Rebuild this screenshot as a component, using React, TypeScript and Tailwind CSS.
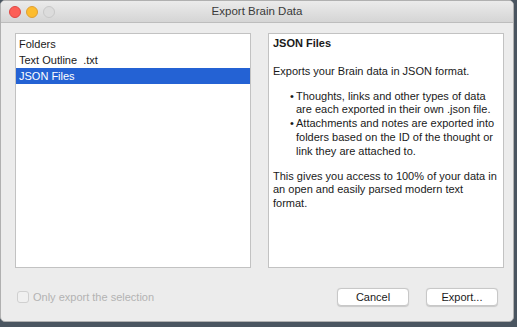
import React from "react";

const font = { fontFamily: '"Liberation Sans", Arial, sans-serif' };

function TrafficLights() {
  return (
    <div className="flex items-center gap-[5px] pl-[8px]">
      <span className="w-[12px] h-[12px] rounded-full bg-[#fc5f57] border border-[#df4744]" />
      <span className="w-[12px] h-[12px] rounded-full bg-[#fdbc2e] border border-[#de9f34]" />
      <span className="w-[12px] h-[12px] rounded-full bg-[#dcdcdc] border border-[#c8c8c8]" />
    </div>
  );
}

export default function App() {
  const items = ["Folders", "Text Outline  .txt", "JSON Files"];
  const selected = 2;

  return (
    <div className="w-[517px] h-[327px] bg-[#4a5560] overflow-hidden" style={font}>
      <div className="flex h-[322px] w-[514px] flex-col rounded-[5px] bg-[#ececec] border border-[#b0b0b0] overflow-hidden">
        {/* title bar */}
        <div className="relative flex h-[22px] shrink-0 items-center bg-gradient-to-b from-[#ebebeb] to-[#d5d5d5] border-b border-[#bdbdbd]">
          <TrafficLights />
          <div className="absolute inset-0 flex items-center justify-center text-[11.5px] text-[#3a3a3a]">
            Export Brain Data
          </div>
        </div>

        {/* panels */}
        <div className="flex gap-[17px] pl-[14px] pt-[10px]">
          <div className="h-[235px] w-[236px] bg-white border border-[#c2c2c2] pt-[2px]">
            {items.map((it, i) => (
              <div
                key={it}
                className={
                  "h-[16px] pl-[3px] text-[11px] leading-[16px] whitespace-pre " +
                  (i === selected ? "bg-[#2462d4] text-white" : "text-[#1a1a1a]")
                }
              >
                {it}
              </div>
            ))}
          </div>

          <div className="h-[235px] w-[236px] bg-white border border-[#c2c2c2] px-[4px] pt-[3px] text-[11px] leading-[13.8px] text-[#1a1a1a]">
            <div className="font-bold">JSON Files</div>
            <p className="mt-[14px]">Exports your Brain data in JSON format.</p>
            <ul className="mt-[11px] pl-[17px]">
              <li className="flex">
                <span className="w-[6px] shrink-0">•</span>
                <span>Thoughts, links and other types of data are each exported in their own .json file.</span>
              </li>
              <li className="flex">
                <span className="w-[6px] shrink-0">•</span>
                <span>Attachments and notes are exported into folders based on the ID of the thought or link they are attached to.</span>
              </li>
            </ul>
            <p className="mt-[11px]">
              This gives you access to 100% of your data in an open and easily parsed modern text format.
            </p>
          </div>
        </div>

        {/* footer */}
        <div className="flex items-center justify-between pl-[16px] pr-[15px] pt-[20px]">
          <label className="flex items-center gap-[4px] text-[11px] text-[#b3b3b3]">
            <span className="w-[12px] h-[12px] rounded-[3px] border border-[#d0d0d0] bg-[#f0f0f0]" />
            Only export the selection
          </label>
          <div className="flex gap-[17px]">
            <button className="h-[18px] w-[72px] rounded-[4px] bg-white border border-[#c8c8c8] shadow-[0_0.5px_1px_rgba(0,0,0,0.15)] text-[11px] text-[#1a1a1a]">
              Cancel
            </button>
            <button className="h-[18px] w-[72px] rounded-[4px] bg-white border border-[#c8c8c8] shadow-[0_0.5px_1px_rgba(0,0,0,0.15)] text-[11px] text-[#1a1a1a]">
              Export...
            </button>
          </div>
        </div>
      </div>
    </div>
  );
}
